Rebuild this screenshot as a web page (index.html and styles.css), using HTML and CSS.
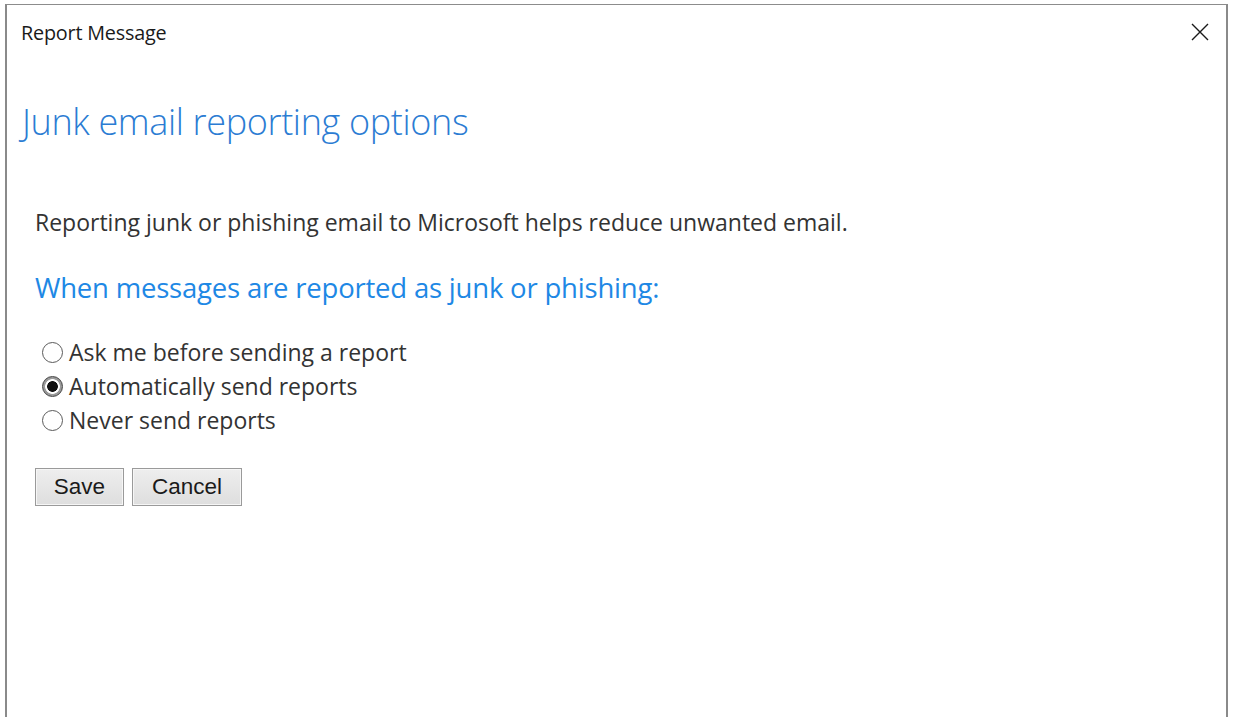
FILE: index.html
```html
<!DOCTYPE html>
<html lang="en">
<head>
<meta charset="utf-8">
<title>Report Message</title>
<link rel="stylesheet" href="styles.css">
</head>
<body>
<div class="window">
  <div class="titlebar">
    <span class="title">Report Message</span>
    <button class="close" aria-label="Close">
      <svg width="18" height="18" viewBox="0 0 18 18"><path d="M1 1 L17 17 M17 1 L1 17" stroke="#1a1a1a" stroke-width="1.4" fill="none"/></svg>
    </button>
  </div>
  <h1 class="heading">Junk email reporting options</h1>
  <div class="content">
    <p class="intro">Reporting junk or phishing email to Microsoft helps reduce unwanted email.</p>
    <h2 class="subheading">When messages are reported as junk or phishing:</h2>
    <form class="options">
      <label class="option"><input type="radio" name="report" class="radio"><span>Ask me before sending a report</span></label>
      <label class="option"><input type="radio" name="report" class="radio" checked><span>Automatically send reports</span></label>
      <label class="option"><input type="radio" name="report" class="radio"><span>Never send reports</span></label>
      <div class="actions">
        <button type="button" class="btn btn-save">Save</button>
        <button type="button" class="btn btn-cancel">Cancel</button>
      </div>
    </form>
  </div>
</div>
</body>
</html>
```
FILE: styles.css
```css
html, body {
  margin: 0;
  height: 100%;
  background: #ffffff;
  overflow: hidden;
}

body {
  padding: 4px 5px 0 5px;
  box-sizing: border-box;
  font-family: "Open Sans", "Noto Sans", sans-serif;
}

.window {
  height: 100%;
  border-top: 1px solid #8c8c8c;
  border-left: 2px solid #8a8a8a;
  border-right: 2px solid #8a8a8a;
  box-sizing: border-box;
  background: #ffffff;
}

.titlebar {
  display: flex;
  align-items: center;
  justify-content: space-between;
  height: 54px;
  padding: 0 17px 0 14px;
}

.title {
  font-size: 19.8px;
  color: #1a1a1a;
  letter-spacing: -0.2px;
}

.close {
  border: 0;
  background: transparent;
  padding: 0;
  width: 18px;
  height: 18px;
  display: flex;
  margin-top: -1px;
}

.heading {
  margin: 41px 0 0 15px;
  font-size: 36px;
  font-weight: 300;
  color: #2b7cd3;
  line-height: 44px;
  letter-spacing: -0.35px;
}

.content {
  padding: 0 0 0 28px;
}

.intro {
  margin: 63px 0 0 0;
  font-size: 23px;
  color: #333333;
  line-height: 30px;
}

.subheading {
  margin: 33px 0 0 0;
  font-size: 27.5px;
  font-weight: 400;
  color: #1e88e5;
  line-height: 36px;
  letter-spacing: -0.2px;
}

.options {
  margin-top: 29px;
  display: flex;
  flex-direction: column;
}

.option {
  display: flex;
  align-items: center;
  height: 34px;
  font-size: 23px;
  color: #333333;
  margin-left: 7px;
}

.radio {
  appearance: none;
  -webkit-appearance: none;
  width: 21px;
  height: 21px;
  margin: 0 6px 0 0;
  border: 1.3px solid #5a5a5a;
  border-radius: 50%;
  background: #ffffff;
  box-sizing: border-box;
}

.radio:checked {
  background: radial-gradient(circle, #111 0 5px, #ffffff 5.7px 7px, #9a9a9a 7.7px);
  border-color: #444;
}

.actions {
  display: flex;
  gap: 8px;
  margin-top: 31px;
}

.btn {
  font-family: "Liberation Sans", Arial, sans-serif;
  font-size: 22.5px;
  color: #1a1a1a;
  height: 38px;
  padding: 0;
  background: linear-gradient(#eeeeee, #dedede);
  border: 1px solid #9a9a9a;
  box-shadow: inset 0 0 0 1px #f6f6f6;
  border-radius: 0;
}

.btn-save {
  width: 89px;
}

.btn-cancel {
  width: 110px;
}
```
